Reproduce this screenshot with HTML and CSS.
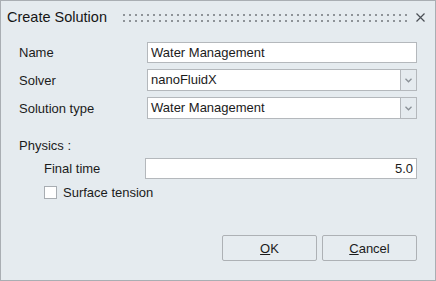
FILE: index.html
```html
<!DOCTYPE html>
<html>
<head>
    <title>Create Solution</title>
    <link rel="stylesheet" href="styles.css">
</head>
<body>
    <div class="dialog">
        <div class="titlebar">
            <span class="title">Create Solution</span>
            <div class="grip">
                <div class="grip-row"></div>
                <div class="grip-row"></div>
            </div>
            <span class="close">
                <svg width="9" height="9" viewBox="0 0 9 9">
                    <path d="M0.5 0.5 L8.5 8.5 M8.5 0.5 L0.5 8.5" stroke="#4a4f55" stroke-width="1.2" fill="none"/>
                </svg>
            </span>
        </div>

        <div class="form">
            <div class="row">
                <label class="label">Name</label>
                <div class="field"><input type="text" class="text-input" value="Water Management"></div>
            </div>
            <div class="row">
                <label class="label">Solver</label>
                <div class="field combo">
                    <div class="combo-text">nanoFluidX</div>
                    <div class="combo-btn">
                        <svg width="7" height="5" viewBox="0 0 7 5">
                            <path d="M0.5 0.8 L3.5 3.8 L6.5 0.8" stroke="#8a9096" stroke-width="1.3" fill="none"/>
                        </svg>
                    </div>
                </div>
            </div>
            <div class="row">
                <label class="label">Solution type</label>
                <div class="field combo">
                    <div class="combo-text">Water Management</div>
                    <div class="combo-btn">
                        <svg width="7" height="5" viewBox="0 0 7 5">
                            <path d="M0.5 0.8 L3.5 3.8 L6.5 0.8" stroke="#8a9096" stroke-width="1.3" fill="none"/>
                        </svg>
                    </div>
                </div>
            </div>

            <div class="section">Physics :</div>
            <div class="sub-row">
                <label class="sub-label">Final time</label>
                <input type="text" class="text-input number" value="5.0">
            </div>
            <div class="check-row">
                <span class="checkbox"></span>
                <span>Surface tension</span>
            </div>
        </div>

        <div class="buttons">
            <button class="btn"><u>O</u>K</button>
            <button class="btn"><u>C</u>ancel</button>
        </div>
    </div>
</body>
</html>
```

FILE: styles.css
```css
body {
    margin: 0;
    font-family: 'Liberation Sans', Arial, sans-serif;
    font-size: 13px;
    color: #1b1b1b;
}

.dialog {
    width: 436px;
    height: 281px;
    box-sizing: border-box;
    border: 1px solid #a9aeb3;
    background-color: #e5ebef;
    display: flex;
    flex-direction: column;
}

/* title bar */
.titlebar {
    height: 36px;
    display: flex;
    align-items: center;
    padding: 0 10px 0 6px;
    box-sizing: border-box;
}

.title {
    font-size: 14.5px;
    color: #161616;
    margin-top: -4px;
}

.grip {
    width: 286px;
    margin-left: 16px;
    display: flex;
    flex-direction: column;
    gap: 4px;
    margin-top: -3px;
}

.grip-row {
    height: 2px;
    background: repeating-linear-gradient(90deg, #8e9398 0 2px, transparent 2px 6px);
}

.close {
    margin-left: auto;
    display: flex;
    margin-top: -4px;
}

/* form */
.form {
    padding: 5px 18px 0 18px;
    display: flex;
    flex-direction: column;
}

.row {
    display: flex;
    align-items: center;
    margin-bottom: 6px;
}

.label {
    width: 128px;
}

.field {
    flex: 1;
    height: 21px;
}

.text-input {
    width: 100%;
    height: 21px;
    box-sizing: border-box;
    border: 1px solid #b4b8bc;
    background: #fff;
    padding: 0 3px;
    font-family: inherit;
    font-size: 13px;
    color: #1b1b1b;
    outline: none;
}

.number {
    text-align: right;
}

.combo {
    display: flex;
    height: 22px;
}

.combo-text {
    flex: 1;
    background: #fff;
    border: 1px solid #b4b8bc;
    padding: 0 3px;
    line-height: 20px;
}

.combo-btn {
    width: 15px;
    border: 1px solid #b4b8bc;
    border-left: none;
    display: flex;
    align-items: center;
    justify-content: center;
}

.section {
    margin-top: 13px;
}

.sub-row {
    display: flex;
    align-items: center;
    padding-left: 25px;
    margin-top: 5px;
}

.sub-label {
    width: 101px;
}

.sub-row .text-input {
    flex: 1;
}

.check-row {
    display: flex;
    align-items: center;
    gap: 6px;
    padding-left: 25px;
    margin-top: 6px;
}

.checkbox {
    width: 11px;
    height: 11px;
    border: 1px solid #a8adb2;
    background: #fff;
}

/* bottom buttons */
.buttons {
    margin-top: auto;
    display: flex;
    justify-content: flex-end;
    gap: 5px;
    padding: 0 18px 19px 0;
}

.btn {
    width: 95px;
    height: 26px;
    border: 1px solid #adb1b5;
    border-radius: 2px;
    background: #e6ecf0;
    font-family: inherit;
    font-size: 13px;
    color: #1b1b1b;
    padding: 0;
}
```
